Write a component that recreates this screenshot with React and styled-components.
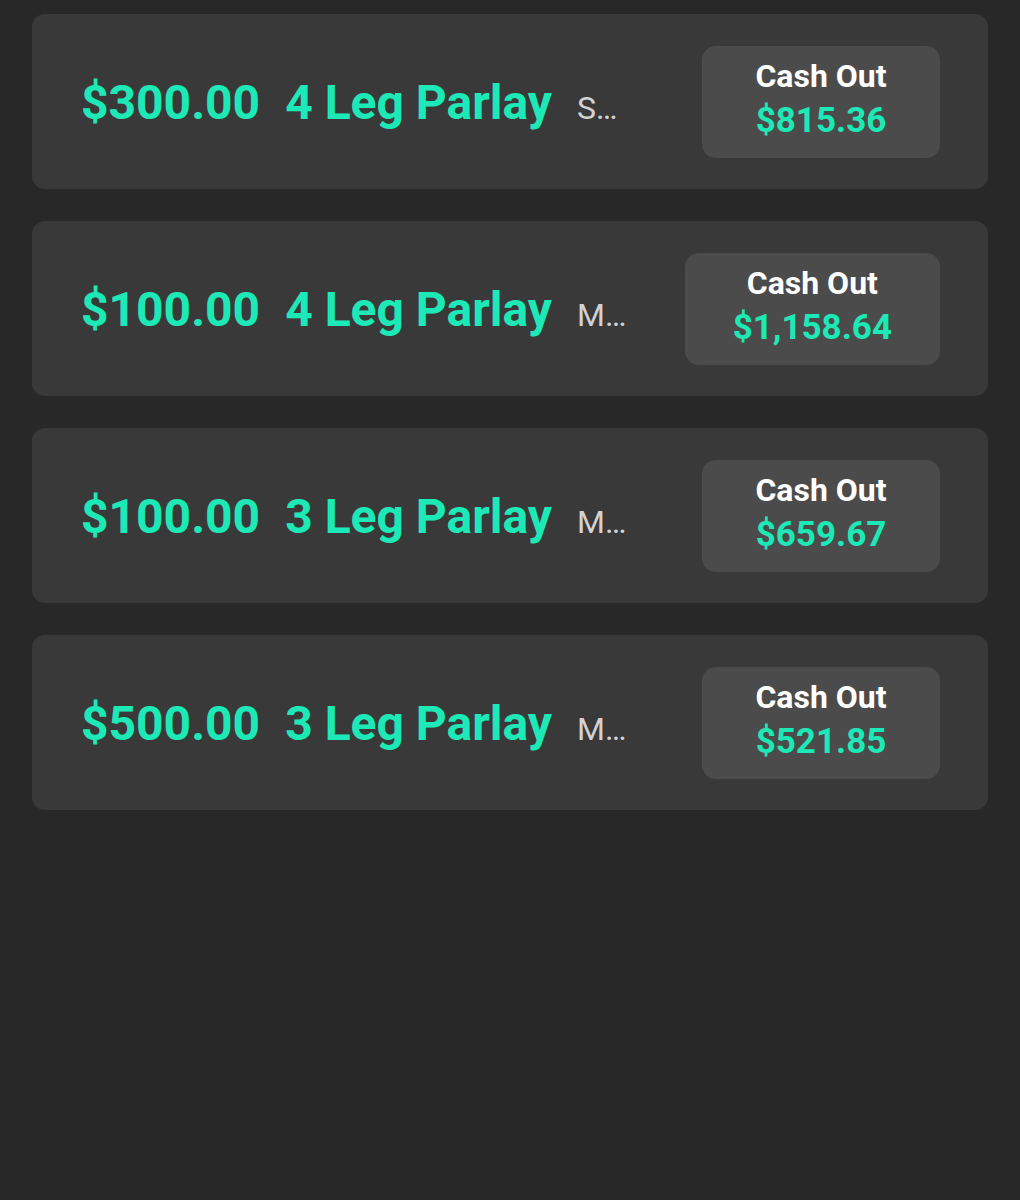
import styled, { createGlobalStyle } from 'styled-components';

const GlobalStyle = createGlobalStyle`
  html, body {
    margin: 0;
    padding: 0;
    background: #282828;
  }
  body {
    font-family: Roboto, "Noto Sans", "Liberation Sans", sans-serif;
    min-height: 1200px;
  }
`;

const bets = [
  { stake: '$300.00', type: '4 Leg Parlay', desc: 'Same Game Parlay', cashOut: '$815.36' },
  { stake: '$100.00', type: '4 Leg Parlay', desc: 'Multi Game Parlay', cashOut: '$1,158.64' },
  { stake: '$100.00', type: '3 Leg Parlay', desc: 'Multi Game Parlay', cashOut: '$659.67' },
  { stake: '$500.00', type: '3 Leg Parlay', desc: 'Multi Game Parlay', cashOut: '$521.85' },
];

const List = styled.div`
  display: flex;
  flex-direction: column;
  gap: 32px;
  padding: 14px 32px;
`;

const Card = styled.div`
  display: flex;
  align-items: center;
  height: 175px;
  padding: 0 48px 0 49px;
  box-sizing: border-box;
  background: #393939;
  border-radius: 13px;
`;

const Title = styled.div`
  display: flex;
  align-items: baseline;
  gap: 25px;
  min-width: 0;
  margin-top: 1px;
`;

const Big = styled.span`
  font-size: 48px;
  font-weight: 700;
  color: #1de9b6;
  white-space: nowrap;
`;

const Desc = styled.span`
  max-width: 54px;
  font-size: 32px;
  color: #d2d2d2;
  white-space: nowrap;
  overflow: hidden;
  text-overflow: ellipsis;
`;

// the button grows with the amount, but never gets narrower than 238px
const CashButton = styled.button`
  margin-left: auto;
  min-width: 238px;
  height: 112px;
  padding: 0 48px 3px;
  box-sizing: border-box;
  display: flex;
  flex-direction: column;
  align-items: center;
  justify-content: center;
  border: none;
  border-radius: 14px;
  background: #4b4b4b;
  font-family: inherit;
  cursor: pointer;
`;

const CashLabel = styled.span`
  font-size: 32px;
  font-weight: 700;
  color: #ffffff;
  line-height: 42px;
  white-space: nowrap;
`;

const CashAmount = styled.span`
  font-size: 35px;
  font-weight: 700;
  color: #1de9b6;
  line-height: 48px;
  white-space: nowrap;
`;

const App = () => (
  <>
    <GlobalStyle />
    <List>
      {bets.map((b, i) => (
        <Card key={i}>
          <Title>
            <Big>{b.stake}</Big>
            <Big>{b.type}</Big>
            <Desc>{b.desc}</Desc>
          </Title>
          <CashButton>
            <CashLabel>Cash Out</CashLabel>
            <CashAmount>{b.cashOut}</CashAmount>
          </CashButton>
        </Card>
      ))}
    </List>
  </>
);

export default App;
